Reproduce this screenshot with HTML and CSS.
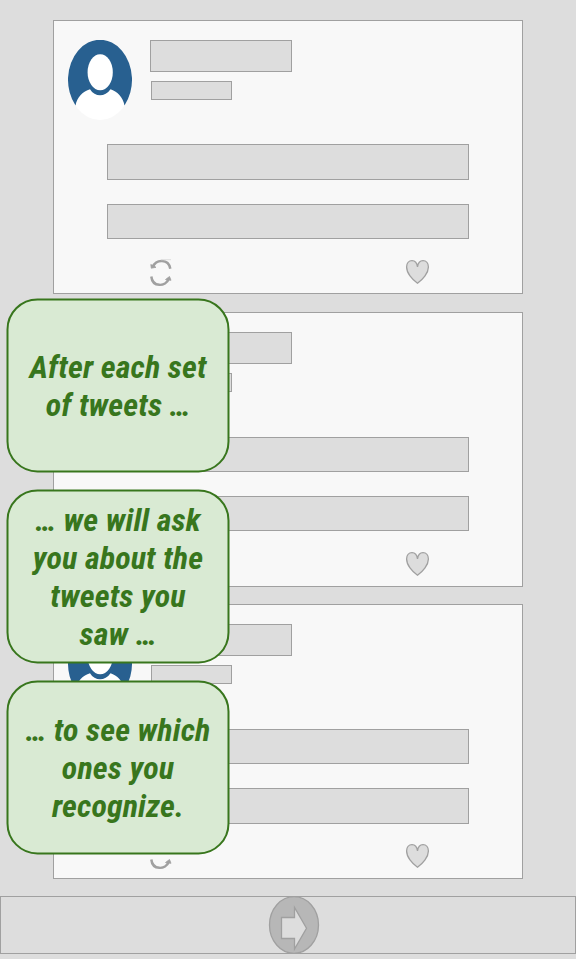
FILE: index.html
```html
<!DOCTYPE html>
<html lang="en">
<head>
<meta charset="utf-8">
<title>Tweet feed instructions</title>
<link rel="stylesheet" href="styles.css">
</head>
<body>
<svg class="defs" aria-hidden="true">
  <symbol id="avatar" viewBox="0 0 64 80">
    <ellipse cx="32" cy="40" rx="32" ry="40" fill="#fff"/>
    <path d="M7.500 65.500A32 40 0 1 1 56.500 65.500C55 57 49 51.500 42.500 49.300C37 57.300 27 57.300 22 49.300C15 51.500 9 57 7.500 65.500Z" fill="#286090"/>
    <ellipse cx="32.200" cy="32.300" rx="12.600" ry="18" fill="#fff"/>
  </symbol>
  <symbol id="retweet" viewBox="0 0 24 28">
    <path d="M3.800 8C7 .2 19.500-.5 21.300 9.800" fill="none" stroke="#a0a0a0" stroke-width="2.500"/>
    <path d="M1.800 5.500L2.300 9.200L7 8.300Z" fill="#a0a0a0" stroke="#a0a0a0" stroke-width=".8"/>
    <path d="M2.300 17.500C3.500 28.300 16.500 28.300 20 19.500" fill="none" stroke="#a0a0a0" stroke-width="2.500"/>
    <path d="M16.500 20.500L20.500 17.500L22 21.300Z" fill="#a0a0a0" stroke="#a0a0a0" stroke-width=".8"/>
    <path d="M12 .7H22" stroke="#ddd"/>
  </symbol>
  <symbol id="heart" viewBox="0 0 25 26">
    <path d="M12.500 8C12 4 9.800 1.700 7 1.700C3.800 1.700 1.600 4.500 1.600 8C1.600 14 7 20.500 12.500 24.300C18 20.500 23.400 14 23.400 8C23.400 4.500 21.200 1.700 18 1.700C15.200 1.700 13 4 12.500 8Z" fill="#ddd" stroke="#a0a0a0" stroke-width="1.300"/>
  </symbol>
</svg>
<div class="screen">
  <main class="feed">
    <article class="card first">
      <header><svg class="avatar"><use href="#avatar"/></svg><div class="who"><div class="name"></div><div class="handle"></div></div></header>
      <div class="line one"></div><div class="line two"></div>
      <footer><svg class="retweet"><use href="#retweet"/></svg><svg class="heart"><use href="#heart"/></svg></footer>
    </article>
    <article class="card second">
      <header><svg class="avatar"><use href="#avatar"/></svg><div class="who"><div class="name"></div><div class="handle"></div></div></header>
      <div class="line one"></div><div class="line two"></div>
      <footer><svg class="retweet"><use href="#retweet"/></svg><svg class="heart"><use href="#heart"/></svg></footer>
    </article>
    <article class="card third">
      <header><svg class="avatar"><use href="#avatar"/></svg><div class="who"><div class="name"></div><div class="handle"></div></div></header>
      <div class="line one"></div><div class="line two"></div>
      <footer><svg class="retweet"><use href="#retweet"/></svg><svg class="heart"><use href="#heart"/></svg></footer>
    </article>
  </main>
  <nav class="bar">
    <svg class="next" viewBox="0 0 52 58">
      <ellipse cx="26" cy="29" rx="24.500" ry="28.300" fill="#b7b7b7" stroke="#a0a0a0" stroke-width="1.300"/>
      <path d="M13.500 21.500H26.500V11.500L38.500 32.300L26.500 53V42.500H13.500Z" fill="#ddd" stroke="#a0a0a0" stroke-width="1.300"/>
    </svg>
  </nav>
  <aside class="notes">
    <div class="note"><p><span>After each set</span><span>of tweets …</span></p></div>
    <div class="note"><p><span>… we will ask</span><span>you about the</span><span>tweets you</span><span>saw …</span></p></div>
    <div class="note"><p><span>… to see which</span><span>ones you</span><span>recognize.</span></p></div>
  </aside>
</div>
</body>
</html>
```
FILE: styles.css
```css
* { box-sizing: border-box; }
body { margin: 0; background: #ddd; }
svg { display: block; }
.defs { position: absolute; width: 0; height: 0; }
.screen { position: relative; height: 959px; overflow: hidden; }
.feed { display: flex; flex-direction: column; height: 896px; padding: 20px 53px 0; }
.card { width: 470px; height: 275px; flex: none; background: #f8f8f8; border: 1px solid #a0a0a0; margin-bottom: 17px; }
.first { height: 274px; margin-bottom: 18px; }
.card header { display: flex; height: 80px; margin: 19px 0 0 14px; }
.avatar { width: 64px; height: 80px; }
.who { margin-left: 18px; }
.name, .handle, .line { background: #ddd; border: 1px solid #a0a0a0; }
.name { width: 142px; height: 32px; }
.handle { width: 81px; height: 19px; margin: 9px 0 0 1px; }
.line { width: 362px; height: 35px; margin-left: 53px; }
.one { margin-top: 25px; }
.two { margin-top: 24px; }
.first .one { height: 36px; margin-top: 24px; }
.third .two { height: 36px; }
.card footer { display: flex; justify-content: space-between; margin: 20px 92px 0 95px; }
.third footer { margin-top: 19px; }
.third .retweet { margin-top: -1px; }
.retweet { width: 24px; height: 28px; }
.heart { width: 25px; height: 26px; }
.bar { display: flex; height: 58px; padding-left: 267px; border: 1px solid #a0a0a0; }
.next { width: 52px; height: 58px; margin-top: -1px; flex: none; }
.notes { position: absolute; top: 298px; left: 6px; display: grid; gap: 17px; transform: translate(.5px, .4px); }
.note { display: flex; align-items: center; justify-content: center; width: 223px; height: 174px; border: 2px solid #38761d; border-radius: 31px; background: #d9ead3; }
.note p { margin: 0 0 -2px; color: #38761d; font: italic 700 32px/38px "Roboto Condensed", Roboto, sans-serif; font-stretch: condensed; letter-spacing: .12px; text-align: center; white-space: nowrap; }
.note span { display: block; }
```
